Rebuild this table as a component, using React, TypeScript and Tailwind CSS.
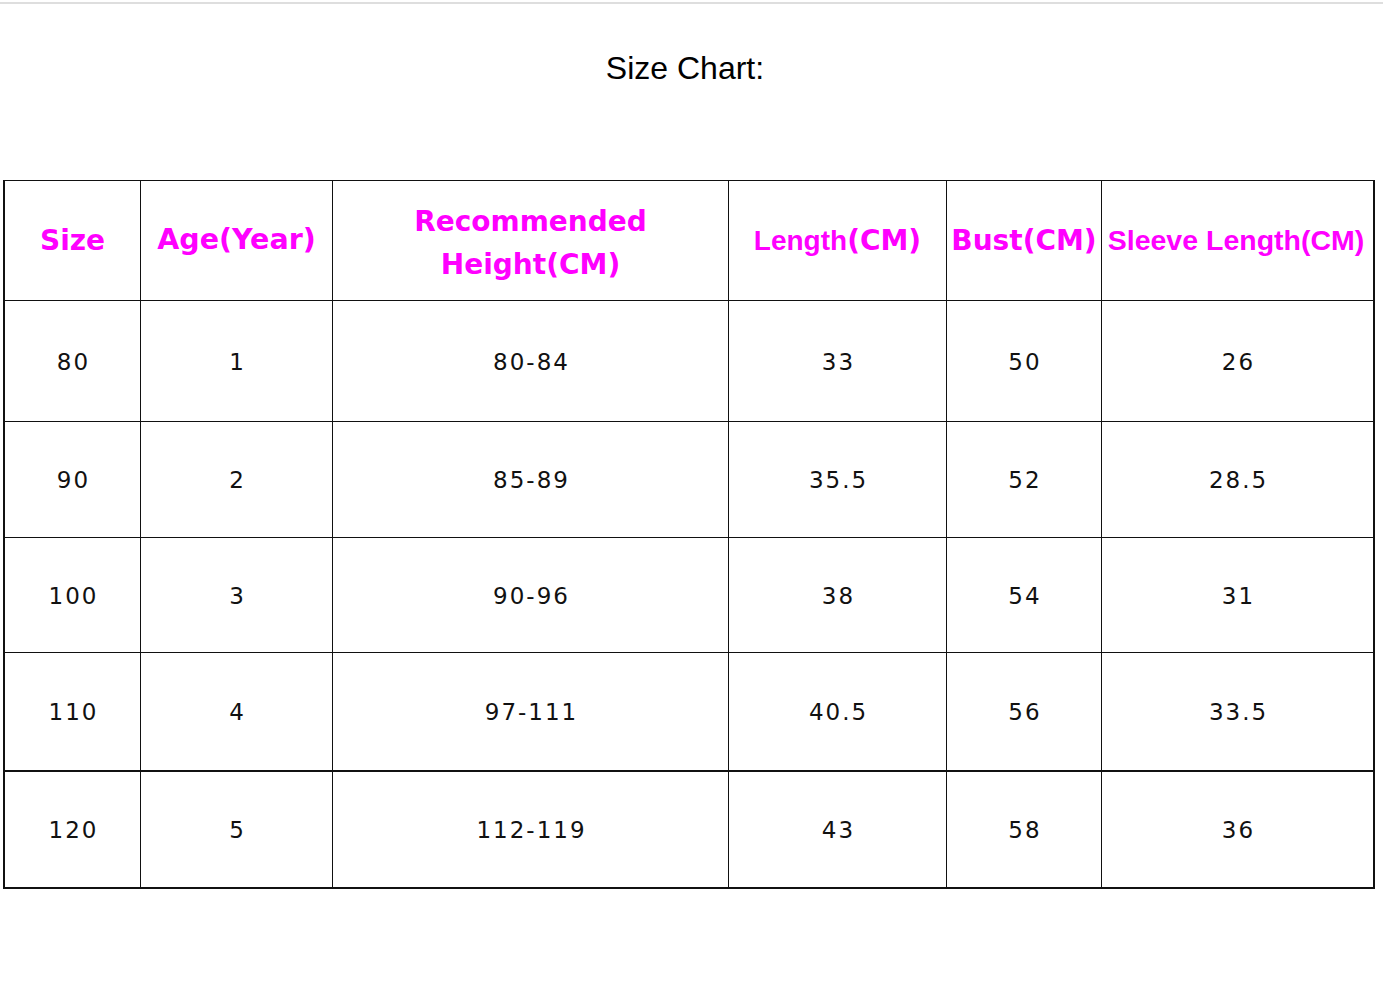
import React from "react";

const cols = ["w-[136px]", "w-[192px]", "w-[396px]", "w-[218px]", "w-[155px]", "w-[273px] border-r-2"];

const rows = [
  { h: "h-[121px]", cells: ["80", "1", "80-84", "33", "50", "26"] },
  { h: "h-[116px]", cells: ["90", "2", "85-89", "35.5", "52", "28.5"] },
  { h: "h-[115px]", cells: ["100", "3", "90-96", "38", "54", "31"] },
  { h: "h-[119px] border-b-2", cells: ["110", "4", "97-111", "40.5", "56", "33.5"] },
  { h: "h-[117px] border-b-2", cells: ["120", "5", "112-119", "43", "58", "36"] },
];

const Cell = ({ className, children }: { className: string; children: React.ReactNode }) => (
  <div className={`flex items-center justify-center text-center border-r border-[#111] shrink-0 ${className}`}>
    {children}
  </div>
);

export default function App() {
  return (
    <div className="w-[1383px] h-[1001px] bg-white overflow-hidden">
      <div className="mt-[2px] h-[2px] bg-[#dedede]" />
      <div className="mt-[49px] h-[31px] pr-[13px] leading-[31px] text-center text-[32px] text-black font-['Liberation_Sans',Arial,sans-serif]">
        Size Chart:
      </div>

      <div className="mt-[96px] ml-[3px] w-fit border-l-2 border-t border-[#111] font-['DejaVu_Sans',Verdana,sans-serif]">
        <div className="flex h-[120px] border-b border-[#111] text-[#ff00ff] font-bold text-[28px]">
          <Cell className={cols[0]}>Size</Cell>
          <Cell className={`${cols[1]} text-[28.5px]`}>Age(Year)</Cell>
          <Cell className={`${cols[2]} leading-[43px] pt-[4px]`}>
            <span>
              Recommended
              <br />
              Height(CM)
            </span>
          </Cell>
          <Cell className={cols[3]}>
            <span>
              <span className="font-['Liberation_Sans',Arial,sans-serif] text-[28px]">Length</span>
              (CM)
            </span>
          </Cell>
          <Cell className={cols[4]}>Bust(CM)</Cell>
          <Cell className={`${cols[5]} font-['Liberation_Sans',Arial,sans-serif] text-[28.5px] pr-[3px]`}>
            Sleeve Length(CM)
          </Cell>
        </div>

        {rows.map((r, i) => (
          <div key={i} className={`flex border-b border-[#111] ${r.h} text-[23px] text-[#111] tracking-[2px]`}>
            {r.cells.map((c, j) => (
              <Cell key={j} className={cols[j]}>
                <span className="pl-[2px] pt-[2px]">{c}</span>
              </Cell>
            ))}
          </div>
        ))}
      </div>
    </div>
  );
}
